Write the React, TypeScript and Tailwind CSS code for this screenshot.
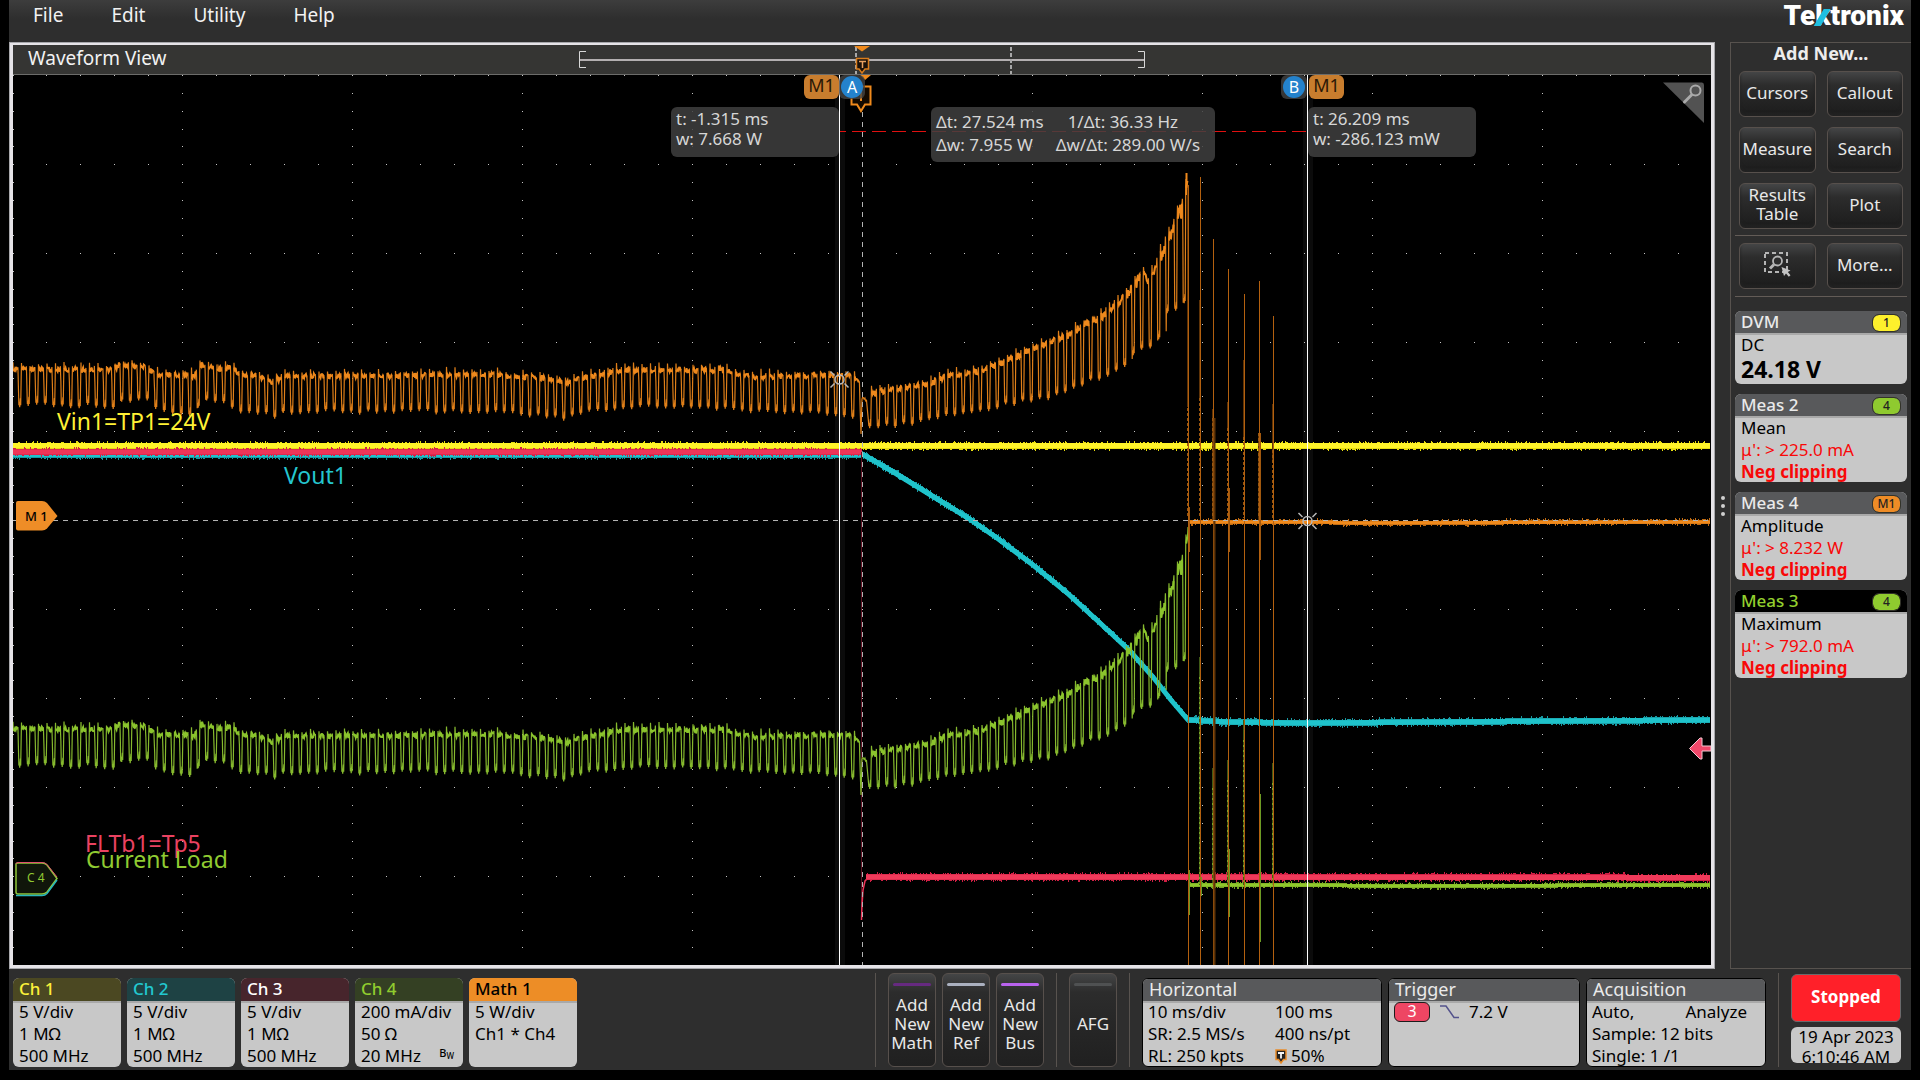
import React, { ReactNode } from "react";

type Pt = [number, number];

const LEFT = 13;
const RIGHT = 1711;
const TOP = 75;
const BOTTOM = 965;

function makeRandom(seed: number) {
  let s = seed;
  return () => {
    s = (s * 1103515245 + 12345) % 2147483648;
    return s / 2147483648;
  };
}

function interp(points: Pt[], x: number) {
  if (x <= points[0][0]) return points[0][1];
  for (let i = 1; i < points.length; i++) {
    if (x <= points[i][0]) {
      const [x0, y0] = points[i - 1];
      const [x1, y1] = points[i];
      return y0 + ((y1 - y0) * (x - x0)) / (x1 - x0);
    }
  }
  return points[points.length - 1][1];
}

/* Upper and lower envelopes of the switching load waveform. */
const CREST: Pt[] = [
  [12, 369], [110, 370], [118, 365], [133, 365], [148, 368], [155, 374], [165, 374], [185, 376],
  [195, 374], [201, 364], [210, 367], [222, 370], [232, 366], [240, 375], [255, 376], [272, 382],
  [284, 376], [400, 376], [480, 374], [540, 378], [566, 382], [590, 376], [620, 370], [720, 370],
  [750, 377], [845, 375], [854, 378], [860, 384], [862, 400], [868, 399], [872, 392], [890, 390],
  [905, 388], [930, 383], [945, 376], [970, 373], [990, 367], [1010, 359], [1030, 350], [1057, 339],
  [1070, 333], [1083, 324], [1095, 320], [1103, 314], [1112, 306], [1120, 299], [1128, 291],
  [1137, 280], [1143, 271], [1148, 282], [1154, 268], [1160, 254], [1164, 241], [1171, 231],
  [1178, 211], [1182, 204], [1186, 182], [1188, 184],
];
const TROUGH: Pt[] = [
  [12, 406], [108, 407], [114, 411], [122, 403], [148, 400], [155, 410], [172, 414], [190, 415],
  [200, 408], [207, 401], [225, 405], [240, 413], [266, 416], [275, 419], [285, 413], [400, 413],
  [500, 412], [566, 420], [590, 412], [640, 407], [720, 409], [760, 413], [830, 414], [852, 419],
  [862, 428], [895, 426], [920, 424], [945, 417], [970, 414], [997, 408], [1023, 402], [1050, 398],
  [1081, 388], [1090, 381], [1107, 377], [1116, 372], [1124, 367], [1132, 354], [1141, 349],
  [1150, 349], [1158, 343], [1167, 313], [1175, 312], [1184, 302],
];

function buildSwitching() {
  const rnd = makeRandom(77);
  const full: Pt[] = [];
  const flats: Pt[][] = [];
  for (let n = -1; n <= 137; n++) {
    const dip = 19.7 + 8.5 * n;
    if (dip > 860 && dip < 862) {
      full.push([861, 434], [862, 399]);
      for (let x = 862.5; x < 867; x += 0.8) full.push([x, 397 + rnd() * 4]);
      continue;
    }
    const hi = (dx: number) => interp(CREST, dip + dx);
    const lo = interp(TROUGH, dip) - 2 + rnd() * 4;
    const slope = Math.max(0, hi(0) - hi(8));
    full.push([dip - 0.8, lo - 2], [dip - 0.4, lo - 5], [dip, lo], [dip + 0.7, lo - 9], [dip + 1, lo - 2]);
    full.push([dip + 1.5, hi(2) + 8], [dip + 1.8, hi(2) - 3 - rnd() * 5]);
    const flat: Pt[] = [];
    for (let dx = 2.1; dx <= 6.6; dx += 0.6) {
      flat.push([dip + dx, hi(dx) - 2.5 + rnd() * (5 + slope * 0.5)]);
    }
    full.push(...flat);
    flats.push(flat);
    const mid = hi(7) + (lo - hi(7)) * (0.3 + rnd() * 0.2);
    full.push([dip + 6.7, hi(7) - rnd() * 4], [dip + 6.9, hi(7) + 5], [dip + 7.2, mid], [dip + 7.5, lo - 8]);
  }
  const keep = (p: Pt) => p[0] >= LEFT && p[0] <= 1188;
  return { full: full.filter(keep), flats: flats.map((f) => f.filter(keep)).filter((f) => f.length > 1) };
}

const path = (pts: Pt[]) => pts.map(([x, y], i) => `${i ? "L" : "M"}${x.toFixed(1)} ${y.toFixed(1)}`).join("");
const toCurrent = ([x, y]: Pt): Pt => [x, 885 - (522 - y) * 1.022];

const wave = buildSwitching();
const powerLine = path(wave.full);
const powerFlat = wave.flats.map(path).join("");
const currentLine = path([...wave.full.map(toCurrent), [1188, 527]]);
const currentFlat = wave.flats.map((f) => path(f.map(toCurrent))).join("");

function fuzz(points: Pt[], half: number, extra: number, seed: number) {
  const rnd = makeRandom(seed);
  let d = "";
  for (let x = Math.ceil(points[0][0]); x < points[points.length - 1][0]; x++) {
    const y = interp(points, x);
    const up = half + Math.floor(rnd() * rnd() * (extra + 1));
    const down = half + Math.floor(rnd() * rnd() * (extra + 1));
    d += `M${x + 0.5} ${(y - up).toFixed(1)}V${(y + down).toFixed(1)}`;
  }
  return d;
}

function Band({ points, color, edge, half, seed }: { points: Pt[]; color: string; edge: string; half: number; seed: number }) {
  return (
    <g fill="none">
      <path d={fuzz(points, half, 2, seed)} stroke={edge} strokeWidth="1" shapeRendering="crispEdges" />
      <path d={path(points)} stroke={color} strokeWidth={half * 2 - 1} />
    </g>
  );
}

function graticule() {
  let d = "";
  for (let r = 0; r < 10; r++) {
    if (r === 5) continue;
    for (let i = 0; i <= 49; i++) d += `M${Math.round(11.8 + 34 * i)} ${75 + 89 * r}h1v1h-1z`;
  }
  for (let c = 0; c < 10; c++) {
    if (c === 5) continue;
    for (let j = 0; j < 50; j++) {
      const x = c === 0 ? 13 : Math.round(11.8 + 170 * c);
      d += `M${x} ${Math.round(75.2 + 17.8 * j)}h1v1h-1z`;
    }
  }
  return d;
}

const BURSTS: { x: number; top: number; dark: [number, number]; fall: number }[] = [
  { x: 1188, top: 185, dark: [190, 407], fall: 408 },
  { x: 1200, top: 177, dark: [300, 400], fall: 398 },
  { x: 1213, top: 239, dark: [409, 520], fall: 418 },
  { x: 1228, top: 269, dark: [402, 430], fall: 428 },
  { x: 1244, top: 294, dark: [360, 438], fall: 437 },
  { x: 1259, top: 281, dark: [433, 520], fall: 433 },
  { x: 1273, top: 316, dark: [404, 460], fall: 450 },
];

const CURRENT_BURSTS: Pt[] = [
  [1199, 657], [1212, 768], [1227, 760], [1243, 720], [1260, 794], [1272, 763],
];

const BLUE_LEFT: Pt[] = [[LEFT, 454.5], [862, 454.5]];
const VOUT: Pt[] = [
  [862, 454], [876, 462], [895, 473], [929, 494], [968, 518], [997, 538], [1033, 565], [1066, 592],
  [1100, 623], [1130, 651], [1153, 677], [1171, 700], [1188, 720],
];
const VOUT_TAIL: Pt[] = [[1188, 720], [1230, 722], [1300, 723], [1440, 722], [1560, 721], [1710, 720]];

function Sparkle({ x, y }: { x: number; y: number }) {
  return (
    <g stroke="#b9b9b9" strokeWidth="1.5" fill="none">
      <circle cx={x} cy={y} r="4.5" />
      <path d={`M${x - 9} ${y - 8}l4 4M${x + 9} ${y - 8}l-4 4M${x - 9} ${y + 8}l4-4M${x + 9} ${y + 8}l-4-4`} />
    </g>
  );
}

function Traces() {
  return (
    <svg className="absolute inset-0 h-full w-full" viewBox={`${LEFT} ${TOP} ${RIGHT - LEFT} ${BOTTOM - TOP}`} preserveAspectRatio="none" aria-hidden="true">
      <rect x="835" y="75" width="10" height="890" fill="#0b0b0b" />
      <rect x="1303" y="75" width="10" height="890" fill="#0b0b0b" />
      <path d={graticule()} fill="#c4c4c4" shapeRendering="crispEdges" />

      <Band points={BLUE_LEFT} color="#1fc3cb" edge="#1899a2" half={3} seed={3} />
      <Band points={VOUT} color="#1fc3cb" edge="#1899a2" half={3} seed={4} />
      <Band points={VOUT_TAIL} color="#1fc3cb" edge="#1899a2" half={3} seed={5} />

      <Band points={[[LEFT, 445.5], [1710, 445.5]]} color="#fff42a" edge="#e6dc10" half={3} seed={11} />
      <Band points={[[LEFT, 452], [862, 452]]} color="#ee3558" edge="#d01f44" half={3} seed={21} />
      <path d="M861.5 452V920" stroke="#5c1222" strokeWidth="1" />
      <path d="M861.5 920L862 905L863 890L865 881L869 877" stroke="#ee3558" strokeWidth="1.5" fill="none" />
      <Band points={[[866, 877], [1710, 877.5]]} color="#f03a5a" edge="#d01f44" half={3} seed={22} />

      <path d={currentLine} stroke="#86b92e" strokeWidth="1.2" fill="none" />
      <path d={currentFlat} stroke="#8bc42d" strokeWidth="2" fill="none" />
      <Band points={[[1189, 885], [1320, 885], [1380, 886], [1540, 885.5], [1710, 885]]} color="#90c82c" edge="#76a523" half={2} seed={31} />
      {CURRENT_BURSTS.map(([x, y]) => (
        <g key={x}>
          <path d={`M${x + 0.5} ${y}V885`} stroke="#3f5a16" strokeWidth="1" />
          <path d={`M${x + 0.5} ${y + 20}V885`} stroke="#79a626" strokeWidth="1" strokeDasharray="2 3" />
        </g>
      ))}
      <path d="M1189.5 870V915M1201.5 877V896M1229.5 849V917M1260.5 794V942" stroke="#6c9a24" strokeWidth="1" />

      <path d={powerLine} stroke="#df7f19" strokeWidth="1.2" fill="none" />
      <path d={powerFlat} stroke="#ee891d" strokeWidth="2" fill="none" />
      <path d="M1186.5 173V195" stroke="#ee891d" strokeWidth="2" />
      <Band points={[[1189, 522], [1320, 522], [1350, 523], [1480, 522.5], [1710, 522]]} color="#f08a1c" edge="#c06b12" half={2} seed={41} />
      {BURSTS.map((b) => (
        <g key={b.x}>
          <path d={`M${b.x + 0.5} ${b.top}V965`} stroke="#b3600f" strokeWidth="1" />
          <path d={`M${b.x - 0.5} ${b.dark[0]}V${b.dark[1]}`} stroke="#5e3307" strokeWidth="1" />
          <path d={`M${b.x - 0.5} ${b.fall}V518`} stroke="#9a560f" strokeWidth="1" strokeDasharray="3 2" />
        </g>
      ))}
      <path d="M1214.5 418V965" stroke="#5e3307" strokeWidth="2" />
      <path d="M1189.5 507V552M1229.5 488V552M1260.5 433V560" stroke="#a2590f" strokeWidth="1" />

      <path d="M13 520.5H1711" stroke="#b4b4b4" strokeWidth="1" strokeDasharray="5 5" />
      <path d="M862.5 112V965" stroke="#b4b4b4" strokeWidth="1" strokeDasharray="5 5" />
      <path d="M840 131.5H1307" stroke="#e01010" strokeWidth="1" strokeDasharray="14 6" strokeDashoffset="8" />
      <path d="M839.5 75V965M1307.5 75V965" stroke="#ffffff" strokeWidth="1" />
      <Sparkle x={839.5} y={379.5} />
      <Sparkle x={1307.5} y={521} />

      <path d="M860 75H871L865 80z" fill="#f08a1c" />
      <path d="M851.5 86.5H870.5V104.5H865L861 111L857 104.5H851.5z" fill="#140a00" stroke="#f08a1c" strokeWidth="2" />
      <path d="M861 90V101" stroke="#f08a1c" strokeWidth="2" />

      <path d="M1711 746H1702V738H1700L1689.5 748.5L1700 759H1702V751H1711z" fill="#f0476a" stroke="#f3c9d2" strokeWidth="1" />

      <path d="M1663 82.5H1702Q1704 82.5 1704 85V123z" fill="#525252" />
      <circle cx="1695.5" cy="90.5" r="5" fill="none" stroke="#aaaaaa" strokeWidth="2" />
      <path d="M1691.5 95L1684.5 102" stroke="#aaaaaa" strokeWidth="3" strokeLinecap="round" />

      <path d="M16 503Q16 501 18 501H42Q45 501 47 503L57.500 516L47 528.500Q45 530.500 42 530.500H18Q16 530.500 16 528.500z" fill="#ee8d27" />
      <path d="M16 864Q16 863 18 863H42Q45 863 47 865L57 878.500L47 892Q45 894 42 894H18Q16 894 16 892z" fill="#10160a" stroke="#90c63a" strokeWidth="1.500" />
      <path d="M16 864Q16 862.500 18 862.500H42Q45 862.500 47 864.500L57 877" fill="none" stroke="#e05070" strokeWidth="1" />
      <path d="M16 895.500H42Q45 895.500 47 893.500L57 880" fill="none" stroke="#28b6bd" strokeWidth="1.500" />
    </svg>
  );
}

function Overview() {
  return (
    <svg className="absolute inset-0 h-full w-full" viewBox="13 45 1698 29" preserveAspectRatio="none" aria-hidden="true">
      <path d="M580 60H1144" stroke="#b3afb0" strokeWidth="2" />
      <path d="M586 51.500H579.500V67.500H586M1138 51.500H1144.500V67.500H1138" fill="none" stroke="#d8d8d8" strokeWidth="1" />
      <path d="M856 47V74M1011 47V74" stroke="#a8a8a8" strokeWidth="2" strokeDasharray="4 2" />
      <path d="M854 46H870L862 51.500z" fill="#f08a1c" />
      <path d="M856.500 58.500H868.500V69H865L862 73L859 69H856.500z" fill="#1a1008" stroke="#d97c1c" strokeWidth="1.500" />
      <path d="M859 61.500H866M862.500 61.500V68" stroke="#e8a060" strokeWidth="1.500" />
    </svg>
  );
}

function PushButton({ children, label }: { children: ReactNode; label?: string }) {
  return (
    <button
      type="button"
      aria-label={label}
      className="flex h-[46px] items-center justify-center rounded-md border border-[#57504c] bg-linear-to-b from-[#444546] via-[#2c2c2c] via-30% to-[#1c1c1c] pb-1 text-center text-[17px] leading-[19px] text-[#e8e8e8] shadow-[inset_0_-3px_3px_#222]"
    >
      {children}
    </button>
  );
}

function Badge({ text, color }: { text: string; color: string }) {
  return (
    <span className={`mt-px flex h-4 w-[27px] items-center justify-center rounded-md text-[12px] leading-4 text-[#222] outline-1 outline-[#33332a] ${color}`}>
      {text}
    </span>
  );
}

function ResultCard({ title, badge, badgeColor, active, className, children }: { title: string; badge: string; badgeColor: string; active?: boolean; className: string; children: ReactNode }) {
  return (
    <button type="button" className={`flex w-full flex-col overflow-hidden rounded-md bg-[#c8c8c8] text-left text-[17px] leading-[22px] text-black ${className}`}>
      <span className={`flex h-6 w-full shrink-0 items-center justify-between border-b-2 border-[#a9a9a9] pr-[7px] pl-[6px] font-medium ${active ? "bg-black text-[#93d02e]" : "bg-[#58595b] text-[#eaeaea]"}`}>
        <span className="leading-5">{title}</span>
        <Badge text={badge} color={badgeColor} />
      </span>
      <span className="-mt-px flex flex-col pl-[6px]">{children}</span>
    </button>
  );
}

function MeasBody({ kind, value }: { kind: string; value: string }) {
  return (
    <>
      <span>{kind}</span>
      <span className="text-[#f80808]">{value}</span>
      <span className="font-bold text-[#f80808]">Neg clipping</span>
    </>
  );
}

function ChannelCard({ name, header, lines, bandwidth }: { name: string; header: string; lines: string[]; bandwidth?: boolean }) {
  return (
    <button type="button" className="relative flex h-[89px] w-[108px] flex-col overflow-hidden rounded-md bg-[#c8c8c8] text-left text-[17px] leading-[22px] text-black">
      <span className={`h-[25px] w-full shrink-0 border-b-2 border-[#a9a9a9] pl-[6px] font-medium ${header}`}>{name}</span>
      <span className="-mt-[2px] flex flex-col pl-[6px]">
        {lines.map((l) => (
          <span key={l}>{l}</span>
        ))}
      </span>
      {bandwidth && (
        <span className="absolute right-[9px] bottom-[6px] text-[11px] leading-4 font-medium">
          B<sub className="text-[8px]">W</sub>
        </span>
      )}
    </button>
  );
}

function TallButton({ lines, bar }: { lines: string[]; bar: string }) {
  return (
    <button
      type="button"
      className="flex h-[94px] w-12 flex-col items-center rounded-md border border-[#57504c] bg-linear-to-b from-[#444546] via-[#2c2c2c] via-20% to-[#202020] px-1 pt-[9px] text-[17px] leading-[19px] text-[#e8e8e8]"
    >
      <span className={`h-[3px] w-full rounded-sm ${bar}`} />
      <span className="flex flex-1 flex-col justify-center pb-[5px]">
        {lines.map((l) => (
          <span key={l}>{l}</span>
        ))}
      </span>
    </button>
  );
}

function SettingsCard({ title, width, children }: { title: string; width: string; children: ReactNode }) {
  return (
    <button type="button" className={`flex h-[89px] flex-col overflow-hidden rounded-md border border-black bg-[#c8c8c8] text-left text-[17px] leading-[22px] text-black ${width}`}>
      <span className="h-6 w-full shrink-0 border-b-2 border-[#a9a9a9] bg-[#58595b] pl-[6px] text-[18px] leading-5 text-[#eaeaea]">{title}</span>
      <span className="-mt-[2px] block w-full pl-[5px]">{children}</span>
    </button>
  );
}

const Divider = () => <div className="h-[94px] w-px bg-[#58534f]" />;

const READOUT = "absolute rounded-md bg-[#404040]/85 text-[17px] leading-5 whitespace-nowrap text-[#d6d6d6]";
const NOTE = "absolute text-[23px] leading-6 whitespace-nowrap";

export default function App() {
  return (
    <div className="flex h-screen flex-col bg-black px-[9px] pb-[10px] font-['Noto_Sans',sans-serif]">
      <div className="flex min-h-0 flex-1 flex-col bg-[#2e2e2e]">
        <header className="flex h-[42px] shrink-0 items-start justify-between bg-linear-to-b from-[#3d3d3d] to-[#2e2e2e] to-45% pr-[7px] pl-6">
          <nav className="flex gap-12 pt-[2px] text-[19px] leading-[26px] text-[#f2f2f2]">
            {["File", "Edit", "Utility", "Help"].map((m) => (
              <button key={m} type="button">
                {m}
              </button>
            ))}
          </nav>
          <div className="relative font-['Roboto',sans-serif] text-[28px] leading-8 font-black text-white">
            Tektronix
            <svg className="absolute top-0 left-0 h-8 w-full" viewBox="0 0 119 32" aria-hidden="true">
              <path d="M29 26L39 9H46L36 26z" fill="#1fbfe0" />
            </svg>
          </div>
        </header>

        <div className="flex min-h-0 flex-1">
          <main className="flex min-w-0 flex-1 flex-col border border-[#a8a8ac] bg-black outline-3 -outline-offset-4 outline-[#e6e4e8]">
            <div className="relative mx-[3px] mt-[2px] flex h-[30px] shrink-0 items-center border-b border-[#6c6c6a] bg-[#353533] pb-1 pl-[15px]">
              <h1 className="text-[19px] leading-6 text-[#f2f2f2]">Waveform View</h1>
              <Overview />
            </div>
            <div className="relative mx-[3px] mb-[3px] min-h-0 flex-1">
              <Traces />

              <div className={`${READOUT} top-8 left-[658px] h-[50px] w-[168px] pt-[2px] pl-[5px]`}>
                <p>t: -1.315 ms</p>
                <p>w: 7.668 W</p>
              </div>
              <div className={`${READOUT} top-8 left-[918px] grid h-[55px] w-[284px] grid-cols-[auto_auto] content-start justify-start gap-x-3 pt-[3px] pl-[5px] leading-[23px]`}>
                <span>Δt: 27.524 ms</span>
                <span className="pl-3">1/Δt: 36.33 Hz</span>
                <span>Δw: 7.955 W</span>
                <span>Δw/Δt: 289.00 W/s</span>
              </div>
              <div className={`${READOUT} top-8 left-[1295px] h-[50px] w-[168px] pt-[2px] pl-[5px]`}>
                <p>t: 26.209 ms</p>
                <p>w: -286.123 mW</p>
              </div>

              <div className="absolute top-0 left-[791px] flex h-6 items-center">
                <span className="h-6 w-[35px] rounded-md bg-[#c87d2e] text-center text-[18px] leading-[21px] text-[#2a1806]">M1</span>
                <span className="flex h-6 w-[26px] items-center justify-center rounded-md bg-[#444]/80">
                  <span className="size-[22px] rounded-full bg-[#2482cc] text-center text-[16px] leading-[22px] text-white">A</span>
                </span>
              </div>
              <div className="absolute top-0 left-[1268px] flex h-6 items-center">
                <span className="flex h-6 w-[26px] items-center justify-center rounded-md bg-[#444]/80">
                  <span className="size-[22px] rounded-full bg-[#2482cc] text-center text-[16px] leading-[22px] text-white">B</span>
                </span>
                <span className="ml-[2px] h-6 w-[35px] rounded-md bg-[#c87d2e] text-center text-[18px] leading-[21px] text-[#2a1806]">M1</span>
              </div>

              <span className={`${NOTE} top-[334px] left-[44px] text-[#fff134]`}>Vin1=TP1=24V</span>
              <span className={`${NOTE} top-[388px] left-[271px] text-[#25c6cf]`}>Vout1</span>
              <span className={`${NOTE} top-[756px] left-[72px] text-[#ea4261]`}>FLTb1=Tp5</span>
              <span className={`${NOTE} top-[772px] left-[73px] text-[#90cb32]`}>Current Load</span>
              <span className="absolute top-[433px] left-3 text-[13px] leading-4 font-medium text-black">M 1</span>
              <span className="absolute top-[795px] left-[14px] text-[12px] leading-4 text-[#90cb32]">C 4</span>
            </div>
          </main>

          <div className="flex w-[15px] shrink-0 flex-col items-center justify-center gap-1">
            <span className="size-1 rounded-full bg-[#cfcfcf]" />
            <span className="size-1 rounded-full bg-[#cfcfcf]" />
            <span className="size-1 rounded-full bg-[#cfcfcf]" />
          </div>

          <aside className="flex w-[181px] shrink-0 flex-col border border-r-0 border-[#57524e] pr-1 pl-1">
            <h2 className="-mt-[2px] h-[30px] text-center text-[18px] leading-6 font-bold text-[#ececec]">Add New...</h2>
            <div className="grid grid-cols-2 gap-x-[11px] gap-y-[10px] border-b border-[#635c57] px-1 pb-[6px]">
              <PushButton>Cursors</PushButton>
              <PushButton>Callout</PushButton>
              <PushButton>Measure</PushButton>
              <PushButton>Search</PushButton>
              <PushButton>
                Results
                <br />
                Table
              </PushButton>
              <PushButton>Plot</PushButton>
            </div>
            <div className="grid grid-cols-2 gap-x-[11px] border-b border-[#635c57] px-1 py-[7px]">
              <PushButton label="Zoom to selection">
                <svg width="28" height="26" viewBox="0 0 28 26" fill="none" aria-hidden="true">
                  <path d="M2 2H24V21H2z" stroke="#b5b5b5" strokeWidth="2" strokeDasharray="4 3" />
                  <circle cx="14.500" cy="10" r="4.500" stroke="#b5b5b5" strokeWidth="1.800" fill="#2c2c2c" />
                  <path d="M11 13.500L7 17.500" stroke="#b5b5b5" strokeWidth="3" />
                  <path d="M18.500 16L27.500 19.500L24.800 21L27.500 24.300L25.800 25.700L23 22.500L21 25z" fill="#c4c4c4" />
                </svg>
              </PushButton>
              <PushButton>More...</PushButton>
            </div>
            <div className="mt-[14px] flex flex-col gap-[10px]">
              <ResultCard title="DVM" badge="1" badgeColor="bg-[#fdf02c]" className="h-[73px]">
                <span>DC</span>
                <span className="text-[23px] leading-[26px] font-bold">24.18 V</span>
              </ResultCard>
              <ResultCard title="Meas 2" badge="4" badgeColor="bg-[#8fca2f]" className="h-[88px]">
                <MeasBody kind="Mean" value="μ': > 225.0 mA" />
              </ResultCard>
              <ResultCard title="Meas 4" badge="M1" badgeColor="bg-[#ee8c26]" className="h-[88px]">
                <MeasBody kind="Amplitude" value="μ': > 8.232 W" />
              </ResultCard>
              <ResultCard title="Meas 3" badge="4" badgeColor="bg-[#8fca2f]" active className="h-[88px]">
                <MeasBody kind="Maximum" value="μ': > 792.0 mA" />
              </ResultCard>
            </div>
          </aside>
        </div>

        <footer className="flex h-[101px] shrink-0 items-end justify-between pr-[10px] pb-[3px] pl-1">
          <div className="flex gap-[6px]">
            <ChannelCard name="Ch 1" header="bg-[#4b4822] text-[#fcf13a]" lines={["5 V/div", "1 MΩ", "500 MHz"]} />
            <ChannelCard name="Ch 2" header="bg-[#1e4244] text-[#22c8d0]" lines={["5 V/div", "1 MΩ", "500 MHz"]} />
            <ChannelCard name="Ch 3" header="bg-[#47252c] text-white" lines={["5 V/div", "1 MΩ", "500 MHz"]} />
            <ChannelCard name="Ch 4" header="bg-[#344023] text-[#90cc2e]" lines={["200 mA/div", "50 Ω", "20 MHz"]} bandwidth />
            <ChannelCard name="Math 1" header="bg-[#ed8d26] text-black" lines={["5 W/div", "Ch1 * Ch4"]} />
          </div>

          <div className="flex items-end gap-3">
            <Divider />
            <div className="flex gap-[6px]">
              <TallButton lines={["Add", "New", "Math"]} bar="bg-[#662a80]" />
              <TallButton lines={["Add", "New", "Ref"]} bar="bg-[#aab0bf]" />
              <TallButton lines={["Add", "New", "Bus"]} bar="bg-[#b963ee]" />
            </div>
            <Divider />
            <TallButton lines={["AFG"]} bar="bg-[#4f5152]" />
            <Divider />
            <div className="flex gap-[6px]">
              <SettingsCard title="Horizontal" width="w-[240px]">
                <span className="grid grid-cols-[127px_1fr]">
                  <span>10 ms/div</span>
                  <span>100 ms</span>
                  <span>SR: 2.5 MS/s</span>
                  <span>400 ns/pt</span>
                  <span>RL: 250 kpts</span>
                  <span className="flex items-center gap-1">
                    <svg width="12" height="15" viewBox="0 0 12 15" aria-hidden="true">
                      <path d="M1 1H11V10.500H8.500L6 14L3.500 10.500H1z" fill="#222" stroke="#e88b28" strokeWidth="1.500" />
                      <path d="M3 4H9M6 4V9.500" stroke="#f4f4f4" strokeWidth="1.800" />
                    </svg>
                    50%
                  </span>
                </span>
              </SettingsCard>
              <SettingsCard title="Trigger" width="w-[192px]">
                <span className="flex items-center">
                  <span className="h-5 w-9 rounded-md border border-[#1c1c1c] bg-[#ee4663] text-center text-[16px] leading-[17px] text-white">3</span>
                  <svg className="ml-[10px]" width="20" height="16" viewBox="0 0 20 16" fill="none" aria-hidden="true">
                    <path d="M0 2H6L14 13.500H19" stroke="#54538c" strokeWidth="1.500" />
                  </svg>
                  <span className="ml-[9px]">7.2 V</span>
                </span>
              </SettingsCard>
              <SettingsCard title="Acquisition" width="w-[180px]">
                <span className="flex justify-between pr-[18px]">
                  <span>Auto,</span>
                  <span>Analyze</span>
                </span>
                <span className="block">Sample: 12 bits</span>
                <span className="block">Single: 1 /1</span>
              </SettingsCard>
            </div>
            <Divider />
            <div className="flex w-[110px] flex-col gap-[5px] pb-1">
              <button type="button" className="h-12 rounded-md border border-[#6a6a6c] bg-[#ff2029] pb-[2px] text-[17px] leading-6 font-bold text-white">
                Stopped
              </button>
              <time className="flex h-9 flex-col rounded-md bg-[#c8c8c8] text-center text-[17px] leading-5 whitespace-nowrap text-black">
                <span>19 Apr 2023</span>
                <span>6:10:46 AM</span>
              </time>
            </div>
          </div>
        </footer>
      </div>
    </div>
  );
}
